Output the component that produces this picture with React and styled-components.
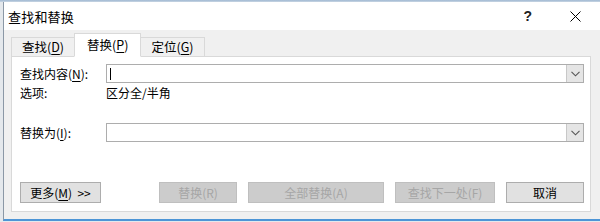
import styled, { createGlobalStyle } from 'styled-components';

const GlobalStyle = createGlobalStyle`
  html, body {
    margin: 0;
    padding: 0;
    background: #e4e8ec;
  }
  body {
    font-family: "Noto Sans CJK SC", "Noto Sans", sans-serif;
    font-size: 12px;
    color: #000;
  }
`;

export default function App() {
  return (
    <>
      <GlobalStyle />
      <Screen>
        <Dialog>
          <TitleBar>
            <Title>查找和替换</Title>
            <TitleButtons>
              <HelpBtn>?</HelpBtn>
              <CloseBtn>
                <svg width="11" height="11" viewBox="0 0 11 11">
                  <path d="M0.5 0.5 L10.5 10.5 M10.5 0.5 L0.5 10.5" stroke="#000" strokeWidth="1" />
                </svg>
              </CloseBtn>
            </TitleButtons>
          </TitleBar>

          <Body>
            <Tabs>
              <Tab>查找(<U>D</U>)</Tab>
              <Tab active>替换(<U>P</U>)</Tab>
              <Tab>定位(<U>G</U>)</Tab>
            </Tabs>

            <Panel>
              <FieldRow>
                <Label>查找内容(<U>N</U>):</Label>
                <Combo>
                  <Caret />
                  <DropBtn>
                    <Chevron />
                  </DropBtn>
                </Combo>
              </FieldRow>

              <OptionRow>
                <Label>选项:</Label>
                <span>区分全/半角</span>
              </OptionRow>

              <FieldRow spaced>
                <Label>替换为(<U>I</U>):</Label>
                <Combo>
                  <DropBtn>
                    <Chevron />
                  </DropBtn>
                </Combo>
              </FieldRow>

              <ButtonBar>
                <Button width={81}>更多(<U>M</U>)&nbsp;&nbsp;&gt;&gt;</Button>
                <ButtonGroup>
                  <Button width={78} disabled>替换(R)</Button>
                  <Button width={136} disabled>全部替换(A)</Button>
                  <Button width={100} disabled>查找下一处(F)</Button>
                  <Button width={78}>取消</Button>
                </ButtonGroup>
              </ButtonBar>
            </Panel>
          </Body>
        </Dialog>
      </Screen>
    </>
  );
}

function Chevron() {
  return (
    <svg width="9" height="6" viewBox="0 0 9 6">
      <polyline points="0.5,0.8 4.5,4.8 8.5,0.8" fill="none" stroke="#555" strokeWidth="1.1" />
    </svg>
  );
}

const Screen = styled.div`
  width: 600px;
  height: 222px;
  padding-top: 2px;
  padding-left: 3px;
  box-sizing: border-box;
  background: linear-gradient(#9fb8d2, #c9d6e3 2px, #e4e8ec 2px);
`;

const Dialog = styled.div`
  width: 597px;
  height: 219px;
  box-sizing: border-box;
  border-left: 1px solid #8b98a6;
  border-bottom: 2px solid #4d95d6;
  background: #f0f0f0;
  display: flex;
  flex-direction: column;
`;

const TitleBar = styled.div`
  height: 28px;
  background: #fff;
  display: flex;
  align-items: center;
  justify-content: space-between;
  padding-left: 4px;
`;

const Title = styled.div`
  font-size: 13px;
  letter-spacing: 0.2px;
`;

const TitleButtons = styled.div`
  display: flex;
  align-items: center;
  gap: 38px;
  padding-right: 19px;
`;

const HelpBtn = styled.span`
  font-family: "Liberation Sans", sans-serif;
  font-size: 14px;
  font-weight: bold;
  color: #222;
`;

const CloseBtn = styled.span`
  display: flex;
  align-items: center;
`;

const Body = styled.div`
  flex: 1;
  padding: 3px 6px 0 7px;
  display: flex;
  flex-direction: column;
`;

const Tabs = styled.div`
  display: flex;
  align-items: flex-end;
  height: 24px;
  position: relative;
  z-index: 1;
  margin-bottom: -1px;
`;

const Tab = styled.div`
  box-sizing: border-box;
  height: ${p => (p.active ? '24px' : '20px')};
  padding: 0 ${p => (p.active ? '12px' : '10px')};
  margin: ${p => (p.active ? '0 -1px' : '0')};
  background: ${p => (p.active ? '#fff' : '#f0f0f0')};
  border: 1px solid #d9d9d9;
  border-bottom: ${p => (p.active ? '1px solid #fff' : '1px solid #d9d9d9')};
  display: flex;
  align-items: center;
  font-size: 12.5px;
  line-height: 1;
  position: relative;
  z-index: ${p => (p.active ? 2 : 1)};
`;

const U = styled.span`
  text-decoration: underline;
  text-underline-offset: 2px;
`;

const Panel = styled.div`
  box-sizing: border-box;
  height: 156px;
  width: 580px;
  background: #fff;
  border: 1px solid #d9d9d9;
  padding: 7px 6px 7px 8px;
  display: flex;
  flex-direction: column;
`;

const FieldRow = styled.div`
  display: grid;
  grid-template-columns: 86px 1fr;
  align-items: center;
  height: 19px;
  margin-top: ${p => (p.spaced ? '23px' : '0')};
`;

const OptionRow = styled.div`
  display: grid;
  grid-template-columns: 86px 1fr;
  align-items: center;
  height: 14px;
  margin-top: 3px;
  line-height: 14px;
`;

const Label = styled.span`
  white-space: nowrap;
  line-height: 1;
`;

const Combo = styled.div`
  box-sizing: border-box;
  height: 19px;
  border: 1px solid #adadad;
  background: #fff;
  display: flex;
  align-items: center;
  justify-content: space-between;
  padding-left: 3px;
`;

const Caret = styled.span`
  width: 1px;
  height: 12px;
  background: #000;
`;

const DropBtn = styled.div`
  box-sizing: border-box;
  width: 17px;
  height: 17px;
  margin-left: auto;
  background: #e5e5e5;
  border-left: 1px solid #c8c8c8;
  display: flex;
  align-items: center;
  justify-content: center;
`;

const ButtonBar = styled.div`
  margin-top: 40px;
  display: flex;
  justify-content: space-between;
  align-items: center;
`;

const ButtonGroup = styled.div`
  display: flex;
  gap: 11px;
`;

const Button = styled.button`
  box-sizing: border-box;
  width: ${p => p.width}px;
  height: 21px;
  padding: 0;
  font-family: "Noto Sans CJK SC", "Noto Sans", sans-serif;
  font-size: 12px;
  line-height: 1;
  color: #000;
  background: #e1e1e1;
  border: 1px solid #adadad;
  display: flex;
  align-items: center;
  justify-content: center;

  &:disabled {
    color: #a6a6a6;
    background: #cccccc;
    border-color: #bfbfbf;
  }
`;
